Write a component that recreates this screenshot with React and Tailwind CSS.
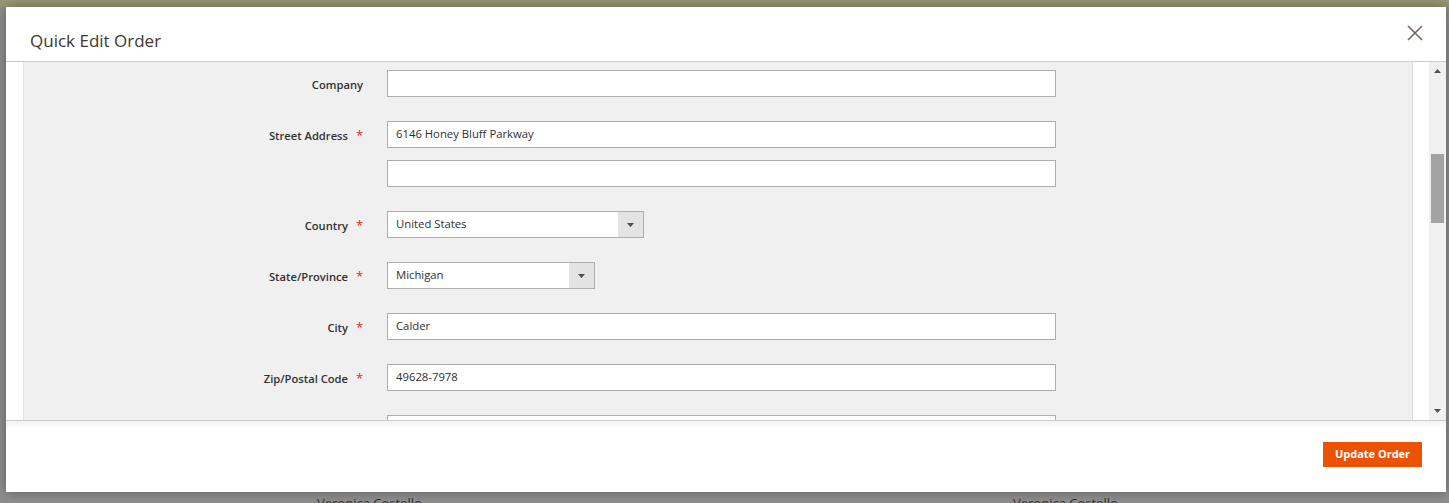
import { useState } from 'react'

const font = { fontFamily: '"Open Sans", "Liberation Sans", sans-serif' }

function Field({ label, required, children, className = '' }) {
  return (
    <div className={`flex items-start ${className}`}>
      <div className="w-[339px] shrink-0 flex justify-end items-center h-[27px] pt-[3px] text-[11.2px] font-semibold text-[#303030]">
        <span>{label}</span>
        {required && <span className="ml-[8px] mr-[1px] w-[6px] text-[#e22626] text-[13px] font-normal">*</span>}
      </div>
      <div className="ml-[24px] flex flex-col gap-[12px]">{children}</div>
    </div>
  )
}

function TextInput({ value, width = 'w-[669px]' }) {
  return (
    <div className={`${width} h-[27px] bg-white border border-[#adadad] flex items-center px-[8px] text-[11.3px] text-[#303030]`}>
      {value}
    </div>
  )
}

function SelectInput({ value, width }) {
  return (
    <div className={`${width} h-[27px] bg-white border border-[#adadad] flex items-stretch text-[11.3px] text-[#303030]`}>
      <div className="flex-1 flex items-center px-[8px]">{value}</div>
      <div className="w-[25px] bg-[#e3e3e3] flex items-center justify-center">
        <svg width="7" height="4" viewBox="0 0 7 4">
          <path d="M0 0h7L3.5 4z" fill="#514943" />
        </svg>
      </div>
    </div>
  )
}

export default function App() {
  const [values] = useState({
    street: '6146 Honey Bluff Parkway',
    country: 'United States',
    state: 'Michigan',
    city: 'Calder',
    zip: '49628-7978',
  })

  return (
    <div className="w-[1449px] h-[503px] bg-[#8e8e8e] flex flex-col overflow-hidden" style={font}>
      <div className="h-[7px] bg-[#9b9671] shrink-0" />
      <div className="flex pl-[6px] pr-[3px]">
        <div className="w-[1440px] bg-white flex flex-col shadow-[0_0_12px_rgba(0,0,0,0.35)]">
          {/* Header */}
          <div className="h-[55px] flex items-center justify-between pl-[24px] pr-[23px] border-b border-[#cccccc] pt-[13px]">
            <h1 className="text-[17px] text-[#41362f] leading-none">Quick Edit Order</h1>
            <svg width="16" height="16" viewBox="0 0 16 16" className="-mt-[16px]">
              <path d="M1 1L15 15M15 1L1 15" stroke="#736963" strokeWidth="1.6" />
            </svg>
          </div>

          {/* Content */}
          <div className="h-[358px] flex overflow-hidden">
            <div className="w-[18px] border-r border-[#e3e3e3] bg-white" />
            <div className="flex-1 bg-[#f0f0f0] pt-[8px] flex flex-col gap-[24px]">
              <Field label="Company">
                <TextInput value="" />
              </Field>
              <Field label="Street Address" required>
                <TextInput value={values.street} />
                <TextInput value="" />
              </Field>
              <Field label="Country" required>
                <SelectInput value={values.country} width="w-[257px]" />
              </Field>
              <Field label="State/Province" required>
                <SelectInput value={values.state} width="w-[208px]" />
              </Field>
              <Field label="City" required>
                <TextInput value={values.city} />
              </Field>
              <Field label="Zip/Postal Code" required>
                <TextInput value={values.zip} />
              </Field>
              <Field label="">
                <TextInput value="" />
              </Field>
            </div>
            <div className="w-[17px] border-l border-[#dedede] bg-white" />
            <div className="w-[17px] bg-[#f0f0f0] flex flex-col items-center relative">
              <svg width="7" height="4" viewBox="0 0 7 4" className="mt-[7px]">
                <path d="M3.5 0L7 4H0z" fill="#505050" />
              </svg>
              <div className="w-[13px] h-[69px] bg-[#a3a3a3] mt-[81px]" />
              <div className="flex-1" />
              <svg width="7" height="4" viewBox="0 0 7 4" className="mb-[7px]">
                <path d="M0 0h7L3.5 4z" fill="#505050" />
              </svg>
            </div>
          </div>

          {/* Footer */}
          <div className="h-[72px] border-t border-[#cccccc] flex items-start justify-end pr-[24px] pt-[21px] shadow-[inset_0_8px_8px_-6px_rgba(0,0,0,0.08)]">
            <button className="w-[99px] h-[25px] bg-[#eb5202] text-white text-[11px] font-bold">Update Order</button>
          </div>
        </div>
      </div>
      <div className="relative h-[11px] text-[13px] text-[#303030]">
        <span className="absolute left-[317px] top-[2px]">Veronica Costello</span>
        <span className="absolute left-[1013px] top-[2px]">Veronica Costello</span>
      </div>
    </div>
  )
}
